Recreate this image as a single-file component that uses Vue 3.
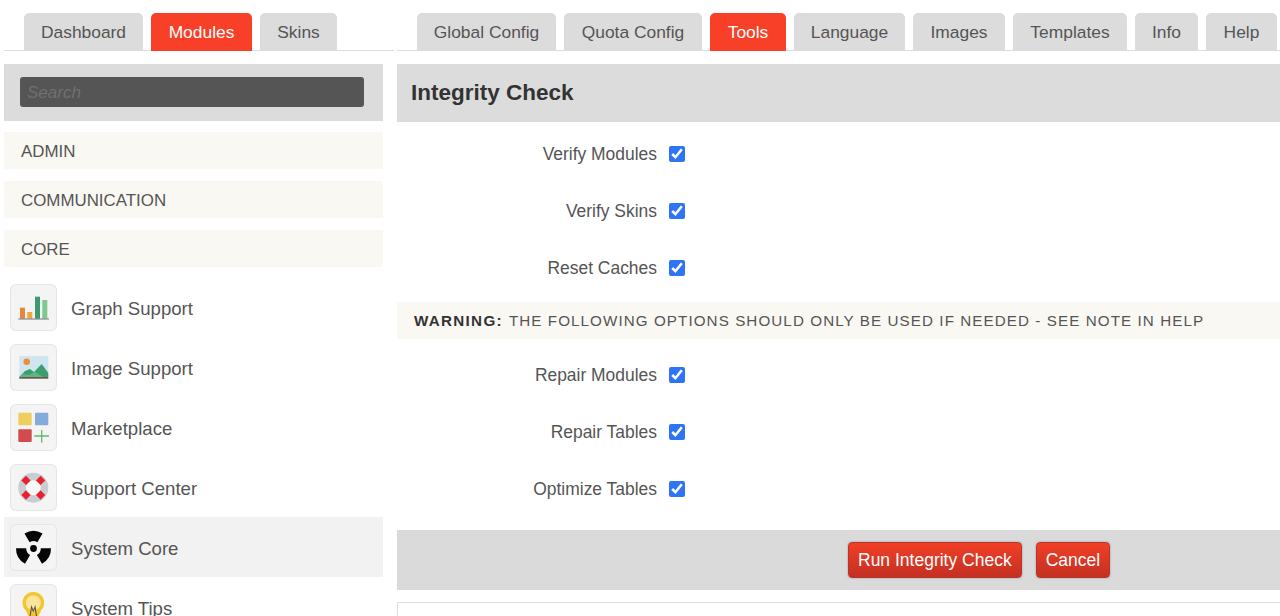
<script setup>
const leftTabs = [
  { label: 'Dashboard' },
  { label: 'Modules', active: true },
  { label: 'Skins' }
]
const rightTabs = [
  { label: 'Global Config' },
  { label: 'Quota Config' },
  { label: 'Tools', active: true },
  { label: 'Language' },
  { label: 'Images' },
  { label: 'Templates' },
  { label: 'Info' },
  { label: 'Help' }
]
const categories = ['ADMIN', 'COMMUNICATION', 'CORE']
const modules = [
  { name: 'Graph Support', icon: 'graph' },
  { name: 'Image Support', icon: 'image' },
  { name: 'Marketplace', icon: 'market' },
  { name: 'Support Center', icon: 'support' },
  { name: 'System Core', icon: 'core', active: true },
  { name: 'System Tips', icon: 'tips' }
]
const firstChecks = ['Verify Modules', 'Verify Skins', 'Reset Caches']
const secondChecks = ['Repair Modules', 'Repair Tables', 'Optimize Tables']
const blade = 'M14.5 9 A17.5 17.5 0 0 1 32.5 9 L27.4 17.8 A7.5 7.5 0 0 0 19.6 17.8Z'
</script>

<template>
  <div class="page">
    <aside class="left">
      <nav class="tabs tabs-left">
        <a v-for="t in leftTabs" :key="t.label" class="tab" :class="{ on: t.active }">{{ t.label }}</a>
      </nav>
      <div class="side">
        <div class="search">
          <input class="search-input" type="text" placeholder="Search" />
        </div>
        <div v-for="c in categories" :key="c" class="cat">{{ c }}</div>
        <ul class="mods">
          <li v-for="m in modules" :key="m.name" class="mod" :class="{ on: m.active }">
            <span class="tile">
              <svg width="47" height="47" viewBox="0 0 47 47">
                <g v-if="m.icon === 'graph'">
                  <rect x="10" y="23.7" width="5" height="11" fill="#e8873a" />
                  <rect x="17.3" y="28" width="5" height="6.7" fill="#f0a545" />
                  <rect x="25" y="12.7" width="5" height="22" fill="#3d9a6a" />
                  <rect x="32.3" y="16" width="5" height="18.7" fill="#7fc88e" />
                  <rect x="8.3" y="34.5" width="30.7" height="1" fill="#6d7a80" />
                </g>
                <g v-else-if="m.icon === 'image'">
                  <rect x="9.3" y="12" width="29" height="22.7" fill="#cfe6f0" />
                  <circle cx="16.7" cy="17.7" r="3.3" fill="#ee8f35" />
                  <path d="M9.3 33 L15 27 L20 25 L24 28 L31.7 20 L38.3 29 V33Z" fill="#3c9e70" />
                  <path d="M9.3 33 L13 30 L19 31 L25 28 L33 33Z" fill="#5fb583" />
                  <rect x="9.3" y="33" width="29" height="1.7" fill="#6b5a4c" />
                </g>
                <g v-else-if="m.icon === 'market'">
                  <rect x="8.3" y="8.7" width="13.4" height="12.6" rx="1" fill="#eecf5e" />
                  <rect x="25" y="8.7" width="13.3" height="12.6" rx="1" fill="#85abdb" />
                  <rect x="8.3" y="25.3" width="13.4" height="12.7" rx="1" fill="#d24b4f" />
                  <path d="M31.7 26 V38.7 M24.3 32 H39" stroke="#5fbb74" stroke-width="1.3" fill="none" />
                </g>
                <g v-else-if="m.icon === 'support'">
                  <circle cx="23.3" cy="23.7" r="15" fill="#c8cdd2" />
                  <circle cx="23.3" cy="23.7" r="7.5" fill="#f8f8f8" />
                  <g fill="#e8202f">
                    <rect x="12.7" y="13.1" width="6.6" height="6.6" transform="rotate(45 16 16.4)" />
                    <rect x="27.3" y="13.1" width="6.6" height="6.6" transform="rotate(45 30.6 16.4)" />
                    <rect x="12.7" y="27.7" width="6.6" height="6.6" transform="rotate(45 16 31)" />
                    <rect x="27.3" y="27.7" width="6.6" height="6.6" transform="rotate(45 30.6 31)" />
                  </g>
                </g>
                <g v-else-if="m.icon === 'core'" fill="#050505">
                  <path :d="blade" transform="translate(0 .5)" />
                  <path :d="blade" transform="translate(0 .5) rotate(120 23.5 24)" />
                  <path :d="blade" transform="translate(0 .5) rotate(240 23.5 24)" />
                  <circle cx="23.5" cy="24.5" r="3.4" />
                </g>
                <g v-else>
                  <path d="M16 27 L19 33 H28 L31 27Z" fill="#f2c531" />
                  <circle cx="23.3" cy="18.7" r="10.8" fill="#f2c531" />
                  <circle cx="23.3" cy="18.7" r="7.5" fill="#fae59a" />
                  <path d="M20 33 L21.5 23 L23.3 27 L25.1 23 L26.6 33" stroke="#5a554c" stroke-width="1.1" fill="none" />
                </g>
              </svg>
            </span>
            <span class="mod-name">{{ m.name }}</span>
          </li>
        </ul>
      </div>
    </aside>

    <main class="right">
      <nav class="tabs tabs-right">
        <a v-for="t in rightTabs" :key="t.label" class="tab" :class="{ on: t.active }">{{ t.label }}</a>
      </nav>
      <div class="panel">
        <h1 class="title">Integrity Check</h1>
        <div class="form first">
          <label v-for="c in firstChecks" :key="c" class="check">
            <span class="check-label">{{ c }}</span>
            <input type="checkbox" checked />
          </label>
        </div>
        <div class="warning"><b>WARNING:</b> THE FOLLOWING OPTIONS SHOULD ONLY BE USED IF NEEDED - SEE NOTE IN HELP</div>
        <div class="form second">
          <label v-for="c in secondChecks" :key="c" class="check">
            <span class="check-label">{{ c }}</span>
            <input type="checkbox" checked />
          </label>
        </div>
        <div class="footer">
          <button class="btn" type="button">Run Integrity Check</button>
          <button class="btn" type="button">Cancel</button>
        </div>
        <div class="next-box"></div>
      </div>
    </main>
  </div>
</template>

<style>
html, body { margin: 0; background: #fff; overflow: hidden; }
</style>

<style scoped>
.page {
  height: 616px;
  overflow: hidden;
  display: grid;
  grid-template-columns: 390px 883px;
  column-gap: 3px;
  padding-left: 4px;
  font-family: "Liberation Sans", Arial, sans-serif;
  color: #555;
}
.tabs {
  display: grid;
  column-gap: 8px;
  justify-content: start;
  height: 37px;
  padding: 13px 0 0 20px;
  border-bottom: 1px solid #ddd;
}
.tabs-left { grid-template-columns: 119px 101px 77px; }
.tabs-right { grid-template-columns: 139px 138px 76px 111px 92px 114px 63px 71px; }
.tab {
  display: flex;
  align-items: center;
  justify-content: center;
  height: 38px;
  box-sizing: border-box;
  border-radius: 5px 5px 0 0;
  background: #dcdcdc;
  color: #555;
  font-size: 17.4px;
}
.tab.on { background: #f83f27; color: #fff; }
.side { width: 379px; margin-top: 13px; }
.search {
  height: 57px;
  box-sizing: border-box;
  padding: 13px 19px 14px 16px;
  background: #dcdcdc;
}
.search-input {
  display: block;
  width: 100%;
  height: 30px;
  box-sizing: border-box;
  padding: 2px 7px 0;
  border: 0;
  border-radius: 3px;
  background: #555;
  font: italic 17px "Liberation Sans", Arial, sans-serif;
  color: #ddd;
}
.search-input::placeholder { color: #707070; opacity: 1; }
.cat {
  height: 37px;
  box-sizing: border-box;
  margin-top: 12px;
  padding: 2px 0 0 17px;
  display: flex;
  align-items: center;
  background: #faf8f3;
  font-size: 16.9px;
}
.search + .cat { margin-top: 11px; }
.mods { list-style: none; margin: 10px 0 0; padding: 0; }
.mod {
  display: flex;
  align-items: center;
  height: 60px;
  padding-left: 6px;
  font-size: 18.6px;
}
.mod.on { background: #f2f2f2; }
.mod-name { margin-top: 4px; }
.tile {
  flex: none;
  width: 47px;
  height: 47px;
  border-radius: 6px;
  background: #f4f4f4;
  box-shadow: inset 0 0 0 1px #e6e6e6;
  margin-right: 14px;
}
.tile svg { display: block; }
.right { min-width: 0; }
.panel { margin-top: 13px; }
.title {
  margin: 0;
  height: 58px;
  display: flex;
  align-items: center;
  padding-left: 14px;
  background: #dcdcdc;
  color: #333;
  font-size: 22.5px;
  font-weight: bold;
}
.form { display: flex; flex-direction: column; }
.first { padding-top: 3px; }
.second { padding-top: 7px; }
.check {
  display: grid;
  grid-template-columns: 260px 16px;
  column-gap: 12px;
  align-items: center;
  height: 57px;
  font-size: 17.45px;
}
.check-label { text-align: right; padding-top: 2px; }
.check input {
  width: 16px;
  height: 16px;
  margin: 0;
  accent-color: #2f74f5;
}
.warning {
  margin-top: 6px;
  height: 37px;
  display: flex;
  align-items: center;
  gap: 1px;
  padding-left: 17px;
  background: #faf8f3;
  font-size: 15.2px;
  letter-spacing: 1.08px;
  white-space: pre;
}
.warning b { color: #333; letter-spacing: 1.3px; }
.footer {
  margin-top: 13px;
  height: 60px;
  display: flex;
  align-items: center;
  gap: 14px;
  padding-left: 451px;
  background: #dadada;
}
.btn {
  height: 36px;
  padding: 0 9px;
  border: 1px solid #b5352a;
  border-radius: 4px;
  background: linear-gradient(#f23f26, #c33022);
  color: #fff;
  font: 17.5px "Liberation Sans", Arial, sans-serif;
  box-shadow: 0 0 2px rgba(0, 0, 0, .35);
}
.next-box {
  margin-top: 12px;
  height: 40px;
  border: 1px solid #ddd;
  border-right: 0;
}
</style>
